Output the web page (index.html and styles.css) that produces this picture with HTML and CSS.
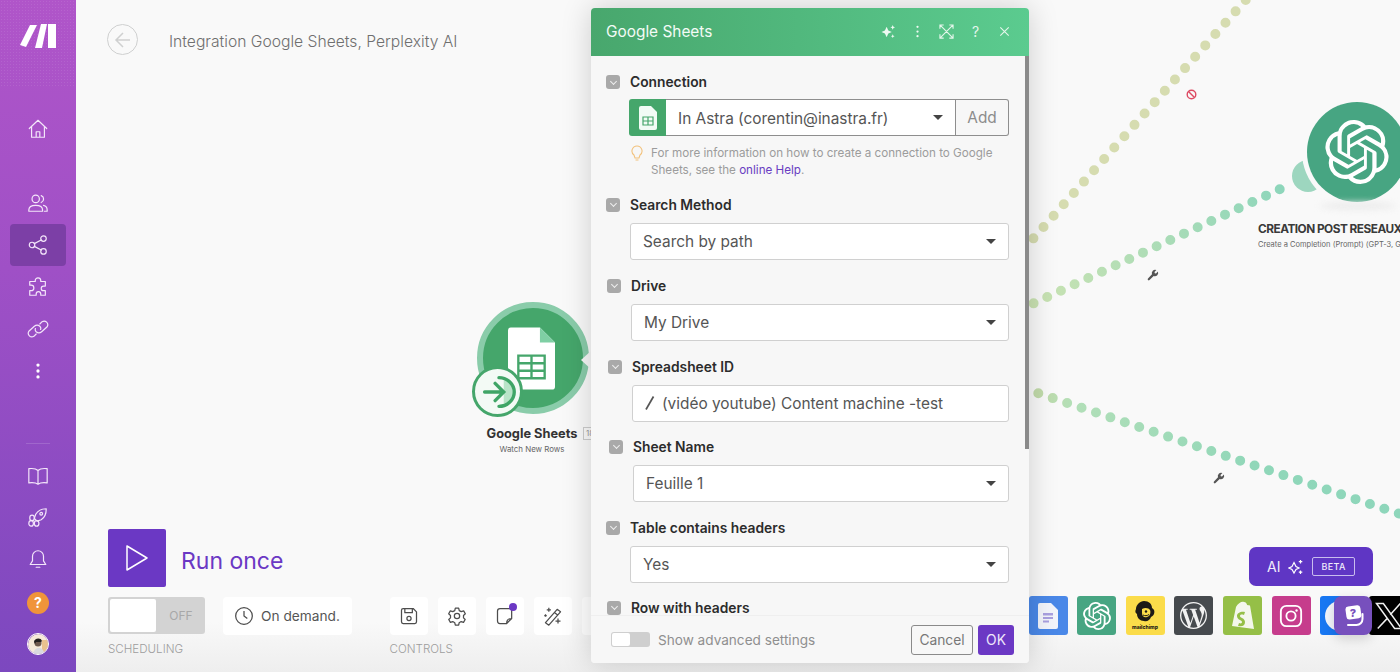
FILE: index.html
```html
<!DOCTYPE html>
<html lang="en">
<head>
  <meta charset="UTF-8">
  <title>Integration Google Sheets, Perplexity AI</title>
  <link rel="stylesheet" href="styles.css">
</head>
<body>
  <aside class="sidebar">
    <div class="logo">
      <svg width="36" height="24" viewBox="20 24 36 24"><path fill="#fff" d="M30 25h7L26 47l-6-2zM41 24h6L42 48h-7zM48 24h8v24h-8z"/></svg>
    </div>
    <nav class="nav-group nav-main">
      <a class="nav-item nav-home"><svg viewBox="0 0 24 24"><path d="M2.500 11.500 12 2.500l9.500 9M5 9.500V21h14V9.500M10 21v-6h4v6"/></svg></a>
      <a class="nav-item nav-team"><svg viewBox="0 0 24 24"><circle cx="9.500" cy="7.500" r="4"/><path d="M2 21v-1.500C2 16 5 14.500 9.500 14.500S17 16 17 19.500V21zM15.500 4a4 4 0 0 1 0 7.500M18 14.500c2.500.5 4 2 4 5V21h-3"/></svg></a>
      <a class="nav-item active"><svg viewBox="0 0 24 24"><circle cx="5.500" cy="12" r="3"/><circle cx="18" cy="5" r="3"/><circle cx="18" cy="19" r="3"/><path d="m8 10.500 7.500-4M8 13.500l7.500 4"/></svg></a>
      <a class="nav-item"><svg viewBox="0 0 24 24"><path d="M9 6V5a3 3 0 0 1 6 0v1h5v5h-2a2.500 2.500 0 0 0 0 5h2v5h-5v-1.500a2.500 2.500 0 0 0-5 0V21H3v-5h1.500a3 3 0 0 0 0-6H3V6z"/></svg></a>
      <a class="nav-item"><svg viewBox="0 0 24 24"><path d="M10 17.500 7.500 20a4 4 0 0 1-5.500-5.500l6-5.500a4.500 4.500 0 0 1 6 0c1 1 1.200 2.500.8 3.500M14 6.500 16.500 4a4 4 0 0 1 5.500 5.500l-6 5.500a4.500 4.500 0 0 1-6 0c-1-1-1.200-2.500-.8-3.500"/></svg></a>
      <a class="nav-item"><svg viewBox="0 0 24 24"><circle class="fill" cx="12" cy="5.500" r="1.800"/><circle class="fill" cx="12" cy="12" r="1.800"/><circle class="fill" cx="12" cy="18.500" r="1.800"/></svg></a>
    </nav>
    <div class="nav-rule"></div>
    <nav class="nav-group nav-lower">
      <a class="nav-item"><svg viewBox="0 0 24 24"><path d="M12 6C10 4 6 3.500 2 4v15.500c4-.5 8 0 10 1.500 2-1.500 6-2 10-1.500V4c-4-.5-8 0-10 2zM12 6v15"/></svg></a>
      <a class="nav-item"><svg viewBox="0 0 24 24"><path d="M21 3c-5 0-9 2-11.500 6L8 13.500l3 3 4.500-1.500C19.500 12.500 21 8 21 3z"/><circle cx="15.500" cy="8.500" r="1.500"/><ellipse cx="5.500" cy="13" rx="2.500" ry="3"/><ellipse cx="4.500" cy="19" rx="2.500" ry="3"/><ellipse cx="10.500" cy="19" rx="2.500" ry="3"/></svg></a>
      <a class="nav-item"><svg viewBox="0 0 24 24"><path d="M12 3a6 6 0 0 0-6 6v5l-2.500 4h17L18 14V9a6 6 0 0 0-6-6zM10 21h4"/></svg></a>
      <a class="nav-item nav-help"><span class="help-dot">?</span></a>
      <a class="nav-item"><span class="avatar"><svg width="22" height="22" viewBox="0 0 22 22"><circle cx="11" cy="11" r="11" fill="#f6ead8"/><path fill="#e9c28f" d="M14 6h6v12h-6z"/><path fill="#d9d9de" d="M5 22c0-6 3-8 6-8s5 2 6 8z"/><circle cx="10" cy="9" r="3.500" fill="#6f5a4d"/><path fill="#24211f" d="M6 8c0-4 7-5 8-1l-1 1H8l-1 2z"/></svg></span></a>
    </nav>
  </aside>

  <main class="canvas">
    <svg class="links" width="1324" height="672" viewBox="76 0 1324 672">
      <defs>
        <linearGradient id="linkTwo" gradientUnits="userSpaceOnUse" x1="1030" y1="305" x2="1280" y2="189">
          <stop offset="0" stop-color="#cbe3b2"/>
          <stop offset="1" stop-color="#8ed6bb"/>
        </linearGradient>
        <linearGradient id="linkThree" gradientUnits="userSpaceOnUse" x1="1038" y1="393" x2="1400" y2="514">
          <stop offset="0" stop-color="#c2dbaa"/>
          <stop offset="0.1" stop-color="#b2dfb8"/>
          <stop offset="0.6" stop-color="#90d7b9"/>
          <stop offset="1" stop-color="#8ed6bb"/>
        </linearGradient>
      </defs>
      <path class="dots" stroke="#d6dcb0" d="M1245.700 0 1030 242.200"/>
      <path class="dots dots-two" stroke="url(#linkTwo)" d="M1279.700 189.300 1030 305"/>
      <path class="dots" stroke="url(#linkThree)" d="M1038.300 393.300 1400 514"/>
    </svg>

    <header class="scenario-head">
      <a class="back"><svg width="20" height="20" viewBox="0 0 20 20"><path d="M17 10H3M10 3l-7 7 7 7"/></svg></a>
      <h1>Integration Google Sheets, Perplexity AI</h1>
    </header>

    <div class="node sheets-node">
      <div class="sheets-disc">
        <svg width="47" height="63" viewBox="0 0 50 66"><path fill="#fff" d="M3 0h31l16 16v47a3 3 0 0 1-3 3H3a3 3 0 0 1-3-3V3a3 3 0 0 1 3-3z"/><path fill="#7fcfa4" d="M34 0l16 16H34z"/><path fill="none" stroke="#45a66b" stroke-width="2.500" d="M11 30h28v24H11zM11 38h28M11 46h28M25 30v24"/></svg>
      </div>
      <div class="trigger">
        <svg width="44" height="44" viewBox="0 0 46 46"><circle cx="23" cy="23" r="21" fill="#f3faf5"/><path d="M29 7a18 18 0 0 1 0 32" fill="#b9e4c8"/><path fill="none" stroke="#3fa566" stroke-width="3.500" stroke-linecap="round" d="M24 8c9 0 16 7 16 15s-7 15-16 15M9 23h19M20 14l9 9-9 9"/></svg>
      </div>
      <div class="node-name">Google Sheets</div>
      <div class="node-sub">Watch New Rows</div>
    </div>
    <span class="node-badge">18</span>

    <div class="node gpt-node">
      <span class="gpt-ear"></span>
      <div class="gpt-disc">
        <svg width="64" height="64" viewBox="0 0 24 24"><path fill="#fff" d="M22.282 9.821a5.985 5.985 0 0 0-.516-4.911 6.046 6.046 0 0 0-6.51-2.9A6.065 6.065 0 0 0 4.981 4.182a5.985 5.985 0 0 0-3.998 2.9 6.046 6.046 0 0 0 .743 7.097 5.98 5.98 0 0 0 .511 4.911 6.051 6.051 0 0 0 6.515 2.9A5.985 5.985 0 0 0 13.26 24a6.056 6.056 0 0 0 5.772-4.206 5.989 5.989 0 0 0 3.998-2.9 6.056 6.056 0 0 0-.748-7.073zm-9.022 12.608a4.476 4.476 0 0 1-2.876-1.041l.142-.08 4.778-2.758a.795.795 0 0 0 .393-.681v-6.737l2.02 1.169a.071.071 0 0 1 .038.052v5.583a4.504 4.504 0 0 1-4.495 4.493zm-9.661-4.125a4.471 4.471 0 0 1-.535-3.014l.142.085 4.783 2.758a.771.771 0 0 0 .781 0l5.843-3.369v2.333a.08.08 0 0 1-.033.061L9.74 19.95a4.499 4.499 0 0 1-6.141-1.646zM2.341 7.896a4.485 4.485 0 0 1 2.366-1.973V11.6a.766.766 0 0 0 .388.677l5.814 3.354-2.02 1.169a.076.076 0 0 1-.071 0l-4.83-2.787A4.504 4.504 0 0 1 2.34 7.872zm16.596 3.856L13.104 8.364 15.119 7.2a.076.076 0 0 1 .071 0l4.83 2.791a4.494 4.494 0 0 1-.676 8.105v-5.678a.79.79 0 0 0-.407-.667zm2.011-3.023l-.142-.085-4.774-2.782a.776.776 0 0 0-.785 0L9.409 9.23V6.897a.066.066 0 0 1 .028-.061l4.83-2.787a4.499 4.499 0 0 1 6.68 4.66zM8.306 12.863l-2.02-1.164a.08.08 0 0 1-.038-.057V6.074a4.499 4.499 0 0 1 7.376-3.454l-.142.081L8.704 5.459a.795.795 0 0 0-.393.681zm1.098-2.365l2.602-1.5 2.607 1.5v2.999l-2.597 1.5-2.607-1.5z"/></svg>
      </div>
      <div class="gpt-shadow"></div>
      <div class="gpt-name">CREATION POST RESEAUX</div>
      <div class="gpt-sub">Create a Completion (Prompt) (GPT-3, GPT-3.5, GPT-4)</div>
    </div>

    <svg class="mark mark-ban" width="11" height="11" viewBox="0 0 11 11"><circle cx="5.500" cy="5.500" r="4.300"/><path d="m2.500 2.500 6 6"/></svg>
    <svg class="mark mark-tool mark-tool-a" width="12" height="12" viewBox="0 0 12 12"><path d="M10.900 2.600 9 4.500 7.800 4.200 7.500 3l1.900-1.900A3.300 3.300 0 0 0 5 5.300L1 9.500A1 1 0 0 0 2.500 11L6.700 7a3.300 3.300 0 0 0 4.200-4.400z"/></svg>
    <svg class="mark mark-tool mark-tool-b" width="12" height="12" viewBox="0 0 12 12"><path d="M10.900 2.600 9 4.500 7.800 4.200 7.500 3l1.900-1.900A3.300 3.300 0 0 0 5 5.300L1 9.500A1 1 0 0 0 2.500 11L6.700 7a3.300 3.300 0 0 0 4.200-4.400z"/></svg>

    <div class="bottom-fade"></div>

    <div class="run-box">
      <button class="run-btn"><svg width="24" height="28" viewBox="0 0 24 28"><path d="M2 2v24l20-12z"/></svg></button>
      <span class="run-label">Run once</span>
    </div>

    <div class="toolbar">
      <div class="tool-section tool-schedule">
        <div class="tool-row">
          <div class="big-toggle"><span class="knob"></span><span class="off">OFF</span></div>
          <div class="tool-chip"><svg width="20" height="20" viewBox="0 0 24 24"><circle cx="12" cy="12" r="10"/><path d="M12 6v6l4 3"/></svg><span>On demand.</span></div>
        </div>
        <div class="tool-caption">SCHEDULING</div>
      </div>
      <div class="tool-section">
        <div class="tool-row tool-icons">
          <div class="tool-btn"><svg width="20" height="20" viewBox="0 0 24 24"><path d="M5 3h12l4 4v12a2 2 0 0 1-2 2H5a2 2 0 0 1-2-2V5a2 2 0 0 1 2-2zM7 3v5h9V3"/><circle cx="12" cy="15" r="2.500"/></svg></div>
          <div class="tool-btn"><svg width="20" height="20" viewBox="0 0 24 24"><circle cx="12" cy="12" r="3.200"/><path d="m10 2.500 4 0 .7 3 2.400 1.300 2.900-.9 2 3.400-2.200 2.100v2.800l2 2-2 3.400-2.800-.9-2.400 1.400-.6 2.900h-4l-.7-2.900-2.400-1.400-2.800.9-2-3.400 2.100-2v-2.800L2 9.300l2-3.400 2.900.9 2.400-1.300z"/></svg></div>
          <div class="tool-btn note-btn"><svg width="20" height="20" viewBox="0 0 24 24"><path d="M6 3h14v12l-6 6H6a3 3 0 0 1-3-3V6a3 3 0 0 1 3-3zM14 21c0-4 1-6 6-6"/></svg><span class="note-dot"></span></div>
          <div class="tool-btn"><svg width="20" height="20" viewBox="0 0 24 24"><path d="M3 20 17 4l4 3L7 23zM14 8l4 3M7 2v5M4.500 4.500h5M18 15v6M15 18h6M3 10v3M1.500 11.500h3"/></svg></div>
          <div class="tool-btn tool-btn-cut"></div>
        </div>
        <div class="tool-caption">CONTROLS</div>
      </div>
    </div>

    <div class="ai-btn">
      <span>AI</span>
      <svg width="16" height="16" viewBox="0 0 16 16"><path d="M6 3.500 8 7.500l3 1.500-3 1.500L6 14l-2-3.500L1 9l3-1.500zM12.500 1v3.500M10.800 2.700h3.500M12.500 11.500V15M10.800 13.200h3.500"/></svg>
      <span class="beta">BETA</span>
    </div>

    <div class="apps">
      <div class="app app-docs"><svg width="20" height="26" viewBox="0 0 20 26"><path fill="#f3f5fb" d="M2 0h11l7 7v17a2 2 0 0 1-2 2H2a2 2 0 0 1-2-2V2a2 2 0 0 1 2-2z"/><path fill="#a9a0e0" d="M5 10h10v2.500H5zM5 14h10v2H5zM5 17.500h6v2H5z"/></svg></div>
      <div class="app app-gpt"><svg width="28" height="28" viewBox="0 0 24 24"><path fill="#fff" d="M22.282 9.821a5.985 5.985 0 0 0-.516-4.911 6.046 6.046 0 0 0-6.51-2.9A6.065 6.065 0 0 0 4.981 4.182a5.985 5.985 0 0 0-3.998 2.9 6.046 6.046 0 0 0 .743 7.097 5.98 5.98 0 0 0 .511 4.911 6.051 6.051 0 0 0 6.515 2.9A5.985 5.985 0 0 0 13.26 24a6.056 6.056 0 0 0 5.772-4.206 5.989 5.989 0 0 0 3.998-2.9 6.056 6.056 0 0 0-.748-7.073zm-9.022 12.608a4.476 4.476 0 0 1-2.876-1.041l.142-.08 4.778-2.758a.795.795 0 0 0 .393-.681v-6.737l2.02 1.169a.071.071 0 0 1 .038.052v5.583a4.504 4.504 0 0 1-4.495 4.493zm-9.661-4.125a4.471 4.471 0 0 1-.535-3.014l.142.085 4.783 2.758a.771.771 0 0 0 .781 0l5.843-3.369v2.333a.08.08 0 0 1-.033.061L9.74 19.95a4.499 4.499 0 0 1-6.141-1.646zM2.341 7.896a4.485 4.485 0 0 1 2.366-1.973V11.6a.766.766 0 0 0 .388.677l5.814 3.354-2.02 1.169a.076.076 0 0 1-.071 0l-4.83-2.787A4.504 4.504 0 0 1 2.34 7.872zm16.596 3.856L13.104 8.364 15.119 7.2a.076.076 0 0 1 .071 0l4.83 2.791a4.494 4.494 0 0 1-.676 8.105v-5.678a.79.79 0 0 0-.407-.667zm2.011-3.023l-.142-.085-4.774-2.782a.776.776 0 0 0-.785 0L9.409 9.23V6.897a.066.066 0 0 1 .028-.061l4.83-2.787a4.499 4.499 0 0 1 6.68 4.66zM8.306 12.863l-2.02-1.164a.08.08 0 0 1-.038-.057V6.074a4.499 4.499 0 0 1 7.376-3.454l-.142.081L8.704 5.459a.795.795 0 0 0-.393.681zm1.098-2.365l2.602-1.5 2.607 1.5v2.999l-2.597 1.5-2.607-1.5z"/></svg></div>
      <div class="app app-chimp"><svg width="32" height="34" viewBox="0 0 32 34"><path fill="#1d1a16" d="M15 2c5 0 8 3 8 7 2 1 3 3 2 6-1 2-2 2-3 3-1 3-4 5-7 4-4 0-7-3-7-7-2-1-2-3-1-5 0-4 4-8 8-8z"/><path fill="#fbdc4a" d="M13 10c3-2 7-1 8 1 1 3 0 6-3 7-3 1-5-1-5-4z"/><circle cx="17" cy="12.500" r="1.200" fill="#1d1a16"/><path fill="none" stroke="#1d1a16" stroke-width="1" d="M14 16c2 1 4 1 6-.5"/><text class="chimp-word" x="16" y="30" text-anchor="middle">mailchimp</text></svg></div>
      <div class="app app-wp"><svg width="27" height="27" viewBox="0 0 24 24"><path fill="#f1f1f1" d="M21.469 6.825c.84 1.537 1.318 3.3 1.318 5.175 0 3.979-2.156 7.456-5.363 9.325l3.295-9.527c.615-1.54.82-2.771.82-3.864 0-.405-.026-.78-.07-1.11m-7.981.105c.647-.03 1.232-.105 1.232-.105.582-.075.514-.93-.067-.899 0 0-1.755.135-2.88.135-1.064 0-2.85-.15-2.85-.15-.585-.03-.661.855-.075.885 0 0 .54.061 1.125.09l1.68 4.605-2.37 7.08L5.354 6.9c.649-.03 1.234-.1 1.234-.1.585-.075.516-.93-.065-.896 0 0-1.746.138-2.874.138-.2 0-.438-.008-.69-.015C4.911 3.15 8.235 1.215 12 1.215c2.809 0 5.365 1.072 7.286 2.833-.046-.003-.091-.009-.141-.009-1.06 0-1.812.923-1.812 1.914 0 .89.513 1.643 1.06 2.531.411.72.89 1.643.89 2.977 0 .915-.354 1.994-.821 3.479l-1.075 3.585-3.9-11.61.001.014zM12 22.784c-1.059 0-2.081-.153-3.048-.437l3.237-9.406 3.315 9.087c.024.053.05.101.078.149-1.12.393-2.325.609-3.582.609M1.211 12c0-1.564.336-3.05.935-4.39L7.29 21.709C3.694 19.96 1.212 16.271 1.211 12M12 0C5.385 0 0 5.385 0 12s5.385 12 12 12 12-5.385 12-12S18.615 0 12 0"/></svg></div>
      <div class="app app-shopify"><svg width="26" height="30" viewBox="0 0 26 30"><path fill="#f4f7ec" d="M6 6c2-4 6-6 8-5 2 0 3 2 3 3l3 .5L24 28 2 25z"/><path fill="#95bf47" d="M15 11l-1 3c-3-1-4 0-4 1 0 2 5 2 5 6s-3 5-7 4l1-3c2 1 3 0 3-1 0-2-5-2-5-6 0-3 4-5 8-4z"/></svg></div>
      <div class="app app-insta"><svg width="24" height="24" viewBox="0 0 26 26"><rect x="2" y="2" width="22" height="22" rx="6"/><circle cx="13" cy="13" r="5"/><circle class="fill" cx="19" cy="7" r="1.300"/></svg></div>
      <div class="app app-blue"><span class="blue-blob"></span></div>
      <div class="app app-x"><svg width="30" height="30" viewBox="0 0 24 24"><path fill="none" stroke="#f0f0f0" stroke-width="1.200" d="M2 2h5.500L22 22h-5.500zM21 2 13 11M11 13.500 3 22"/></svg></div>
    </div>
    <div class="chat-btn"><svg width="22" height="22" viewBox="0 0 22 22"><path fill="#fff" d="M7 1h9a3 3 0 0 1 3 3v7a3 3 0 0 1-3 3H7a3 3 0 0 1-3-3V4a3 3 0 0 1 3-3z" transform="rotate(-8 11 8)"/><path fill="none" stroke="#fff" stroke-width="2" stroke-linecap="round" d="M20.500 9v5a6 6 0 0 1-6 6H6"/><text x="11" y="12" text-anchor="middle" class="chat-q">?</text></svg></div>

    <span class="modal-arrow"></span>
    <section class="modal">
      <div class="modal-head">
        <span class="modal-title">Google Sheets</span>
        <div class="modal-actions">
          <svg width="15" height="15" viewBox="0 0 16 16"><path class="fill" d="M6 3l1.800 4 3.700 1.600-3.700 1.600L6 14l-1.800-3.800L.5 8.600l3.700-1.600zM12.500 1l.8 1.800 1.700.7-1.700.8-.8 1.700-.8-1.700-1.700-.8 1.700-.7zM12.500 11l.7 1.400 1.300.6-1.300.6-.7 1.400-.7-1.400-1.300-.6 1.300-.6z"/></svg>
          <svg width="15" height="15" viewBox="0 0 16 16"><circle class="fill" cx="8" cy="3" r="1.200"/><circle class="fill" cx="8" cy="8" r="1.200"/><circle class="fill" cx="8" cy="13" r="1.200"/></svg>
          <svg width="15" height="15" viewBox="0 0 16 16"><path d="M1 5V1h4M11 1h4v4M15 11v4h-4M5 15H1v-4M1 1l14 14M15 1 1 15"/></svg>
          <span class="head-q">?</span>
          <svg width="15" height="15" viewBox="0 0 16 16"><path d="m3.500 3.500 9 9M12.500 3.500l-9 9"/></svg>
        </div>
      </div>
      <div class="modal-body">
        <div class="field">
          <div class="field-label"><span class="chev"></span>Connection</div>
          <div class="conn">
            <span class="conn-icon"><svg width="18" height="24" viewBox="0 0 18 24"><path fill="#f2fbf5" d="M2 0h10l6 6v16a2 2 0 0 1-2 2H2a2 2 0 0 1-2-2V2a2 2 0 0 1 2-2z"/><path fill="none" stroke="#45a66b" stroke-width="1.200" d="M4 11h10v8H4zM4 15h10M9 11v8"/></svg></span>
            <span class="conn-value">In Astra (corentin@inastra.fr)<i class="caret"></i></span>
            <span class="conn-add">Add</span>
          </div>
          <div class="hint">
            <svg width="12" height="16" viewBox="0 0 12 16"><path d="M6 1a5 5 0 0 0-3 9l1 3h4l1-3a5 5 0 0 0-3-9zM4.500 15h3"/></svg>
            <p>For more information on how to create a connection to Google Sheets, see the <a>online Help</a>.</p>
          </div>
        </div>
        <div class="field field-search">
          <div class="field-label"><span class="chev"></span>Search Method</div>
          <div class="select">Search by path<i class="caret"></i></div>
        </div>
        <div class="field field-drive">
          <div class="field-label"><span class="chev"></span>Drive</div>
          <div class="select">My Drive<i class="caret"></i></div>
        </div>
        <div class="field field-sheet">
          <div class="field-label"><span class="chev"></span>Spreadsheet ID</div>
          <div class="select select-path"><svg width="10" height="16" viewBox="0 0 10 16"><path d="M8.500 1.500 1 14.500"/></svg>(vidéo youtube) Content machine -test</div>
        </div>
        <div class="field field-name">
          <div class="field-label"><span class="chev"></span>Sheet Name</div>
          <div class="select">Feuille 1<i class="caret"></i></div>
        </div>
        <div class="field field-table">
          <div class="field-label"><span class="chev"></span>Table contains headers</div>
          <div class="select">Yes<i class="caret"></i></div>
        </div>
        <div class="field field-row">
          <div class="field-label"><span class="chev"></span>Row with headers</div>
        </div>
        <span class="scroll"></span>
      </div>
      <div class="modal-foot">
        <span class="mini-toggle"><i></i></span>
        <span class="adv">Show advanced settings</span>
        <button class="btn-cancel">Cancel</button>
        <button class="btn-ok">OK</button>
      </div>
    </section>
  </main>
</body>
</html>
```

FILE: styles.css
```css
* {
  box-sizing: border-box;
}
body {
  margin: 0;
  width: 1400px;
  height: 672px;
  overflow: hidden;
  display: flex;
  font-family: Inter, "Liberation Sans", sans-serif;
  background-color: #f9f9f9;
  color: #333;
}
svg {
  display: block;
}

/* sidebar */
.sidebar {
  width: 76px;
  flex-shrink: 0;
  display: flex;
  flex-direction: column;
  align-items: center;
  background: linear-gradient(180deg, #b055c9 0%, #9f50c6 40%, #7c48bf 100%);
}
.logo {
  width: 100%;
  height: 88px;
  padding: 24px 0 0 20px;
  background-image: radial-gradient(rgba(255, 255, 255, 0.09) 1px, transparent 1px);
  background-size: 3px 3px;
}
.nav-group {
  display: flex;
  flex-direction: column;
  align-items: center;
  width: 100%;
}
.nav-main {
  margin-top: 20px;
}
.nav-item {
  width: 56px;
  height: 42px;
  display: flex;
  align-items: center;
  justify-content: center;
  border-radius: 4px;
}
.nav-item svg {
  width: 22px;
  height: 22px;
  fill: none;
  stroke: #f4e6fa;
  stroke-width: 1.300;
  stroke-linejoin: round;
  stroke-linecap: round;
}
.nav-item .avatar svg {
  stroke: none;
}
.nav-item svg .fill {
  fill: #fff;
  stroke: none;
}
.nav-home {
  margin-bottom: 32px;
}
.active {
  background-color: #7c3fa6;
}
.nav-rule {
  width: 24px;
  height: 1px;
  margin: 51px 0 11px;
  background-color: rgba(255, 255, 255, 0.15);
}
.nav-lower .nav-item {
  height: 41.500px;
}
.nav-lower .nav-help {
  margin-top: 2.500px;
}
.help-dot {
  width: 22px;
  height: 22px;
  border-radius: 50%;
  background-color: #f0943a;
  color: #fff;
  font-size: 14px;
  font-weight: 700;
  line-height: 22px;
  text-align: center;
}
.avatar {
  width: 22px;
  height: 22px;
  border-radius: 50%;
  overflow: hidden;
  border: 1px solid #fff;
}

/* canvas */
.canvas {
  position: relative;
  flex: 1;
  height: 672px;
  overflow: hidden;
}
.links {
  position: absolute;
  top: 0;
  left: 0;
}
.dots {
  fill: none;
  stroke-width: 10;
  stroke-linecap: round;
  stroke-dasharray: 0 15.200;
}
.dots-two {
  stroke-dasharray: 0 15.070;
}
.scenario-head {
  position: absolute;
  top: 24px;
  left: 31px;
  display: flex;
  align-items: center;
}
.back {
  width: 31px;
  height: 31px;
  border: 1.500px solid #cfd0d0;
  border-radius: 50%;
  display: flex;
  align-items: center;
  justify-content: center;
}
.back svg {
  fill: none;
  stroke: #cfd0d0;
  stroke-width: 1.500;
}
.scenario-head h1 {
  margin: 3px 0 0 31px;
  font-size: 15.670px;
  font-weight: 300;
  color: #6f6f6f;
}

/* nodes */
.node {
  position: absolute;
}
.sheets-node {
  left: 396px;
  top: 302px;
  width: 120px;
}
.sheets-disc {
  width: 112px;
  height: 112px;
  margin-left: 5px;
  padding-right: 3px;
  border-radius: 50%;
  background-color: #45a66b;
  border: 6px solid #8accaa;
  display: flex;
  align-items: center;
  justify-content: center;
}
.trigger {
  position: absolute;
  left: 0;
  top: 64px;
  width: 51px;
  height: 51px;
  border: 3px solid #45a66b;
  border-radius: 50%;
  background-color: #f3faf5;
  display: flex;
  align-items: center;
  justify-content: center;
}
.node-name {
  width: 120px;
  margin-top: 12px;
  font-size: 12.800px;
  font-weight: 700;
  text-align: center;
  color: #333;
}
.node-sub {
  width: 120px;
  margin-top: 3px;
  font-size: 7.900px;
  text-align: center;
  color: #666;
}
.node-badge {
  position: absolute;
  left: 507px;
  top: 427px;
  width: 14px;
  height: 13px;
  border: 1px solid #ccc;
  font-size: 8px;
  color: #999;
  line-height: 11px;
  text-align: center;
}
.gpt-node {
  left: 1182px;
  top: 102px;
  width: 300px;
  height: 150px;
}
.gpt-disc {
  position: absolute;
  left: 49px;
  top: 0;
  width: 100px;
  height: 100px;
  border-radius: 50%;
  background-color: #47a582;
  box-shadow: 0 0 0 5px #f9f9f9;
  display: flex;
  align-items: center;
  justify-content: center;
}
.gpt-ear {
  position: absolute;
  left: 34px;
  top: 58px;
  width: 32px;
  height: 32px;
  border-radius: 50%;
  background-color: #9dd6bf;
}
.gpt-shadow {
  position: absolute;
  left: 62px;
  top: 100px;
  width: 76px;
  height: 8px;
  border-radius: 50%;
  background-color: #ececec;
  filter: blur(3px);
}
.gpt-name {
  position: absolute;
  left: 0;
  top: 120px;
  font-size: 11.800px;
  font-weight: 700;
  letter-spacing: -0.5px;
  white-space: nowrap;
  color: #3a3a3a;
}
.gpt-sub {
  position: absolute;
  left: 0;
  top: 138px;
  font-size: 7.500px;
  white-space: nowrap;
  color: #666;
}
.mark {
  position: absolute;
  fill: none;
  stroke-width: 1.400;
}
.mark-ban {
  left: 1110px;
  top: 89px;
  stroke: #dd4a62;
}
.mark-tool {
  fill: #555;
  stroke: none;
}
.mark-tool-a {
  left: 1071px;
  top: 269px;
}
.mark-tool-b {
  left: 1137px;
  top: 472px;
}
.bottom-fade {
  position: absolute;
  left: 0;
  right: 0;
  bottom: 0;
  height: 50px;
  background: linear-gradient(180deg, rgba(238, 238, 238, 0) 0%, #eeeeee 100%);
}

/* run + toolbar */
.run-box {
  position: absolute;
  left: 32px;
  top: 529px;
  display: flex;
  align-items: center;
}
.run-btn {
  width: 58px;
  height: 58px;
  padding: 0;
  border: none;
  border-radius: 2px;
  background-color: #6b38c4;
  display: flex;
  align-items: center;
  justify-content: center;
}
.run-btn svg {
  fill: none;
  stroke: #fff;
  stroke-width: 1.500;
  stroke-linejoin: round;
}
.run-label {
  margin: 5px 0 0 15px;
  font-size: 23px;
  color: #6b38c4;
}
.toolbar {
  position: absolute;
  left: 32px;
  top: 597px;
  display: flex;
  gap: 37.500px;
}
.tool-row {
  display: flex;
  gap: 18px;
}
.tool-icons {
  gap: 10px;
}
.tool-caption {
  margin-top: 7px;
  font-size: 11.600px;
  font-weight: 300;
  color: #9d9d9d;
}
.big-toggle {
  width: 97px;
  height: 37px;
  display: flex;
  padding: 2px;
  border-radius: 3px;
  background-color: #d3d3d3;
}
.knob {
  width: 46px;
  height: 33px;
  margin-right: 3px;
  background-color: #fff;
  border-radius: 2px;
}
.off {
  flex: 1;
  font-size: 12px;
  line-height: 33px;
  text-align: center;
  color: #a8a8a8;
}
.tool-chip {
  width: 129px;
  height: 38px;
  display: flex;
  align-items: center;
  gap: 7px;
  padding-left: 11px;
  border-radius: 4px;
  background-color: #fff;
  font-size: 13.700px;
  color: #555;
}
.tool-chip svg,
.tool-btn svg {
  fill: none;
  stroke: #4d4d4d;
  stroke-width: 1.500;
  stroke-linejoin: round;
}
.tool-btn {
  position: relative;
  width: 38px;
  height: 38px;
  display: flex;
  align-items: center;
  justify-content: center;
  border-radius: 4px;
  background-color: #fff;
}
.note-dot {
  position: absolute;
  top: 6px;
  right: 7px;
  width: 8px;
  height: 8px;
  border-radius: 50%;
  background-color: #6b38c4;
}
.ai-btn {
  position: absolute;
  left: 1173px;
  top: 547px;
  width: 124px;
  height: 39px;
  display: flex;
  align-items: center;
  gap: 8px;
  padding-left: 18px;
  border-radius: 7px;
  background-color: #5f36c4;
  color: #f0ecfb;
  font-size: 14px;
}
.ai-btn svg {
  fill: none;
  stroke: #fff;
  stroke-width: 1.200;
}
.beta {
  padding: 3px 8px;
  border: 1px solid #c9bcee;
  border-radius: 2px;
  font-size: 9px;
  font-weight: 500;
  letter-spacing: 0.4px;
}

/* app strip */
.apps {
  position: absolute;
  left: 952.500px;
  top: 596px;
  display: flex;
  gap: 9.670px;
}
.app {
  width: 39px;
  height: 39px;
  display: flex;
  align-items: center;
  justify-content: center;
  border-radius: 3px;
  overflow: hidden;
}
.app-docs {
  background-color: #4a88e8;
}
.app-gpt {
  background-color: #47a582;
}
.app-chimp {
  background-color: #fbdc4a;
}
.chimp-word {
  font-size: 5px;
  font-weight: 800;
  fill: #1d1a16;
}
.app-wp {
  background-color: #464a4e;
}
.app-shopify {
  background-color: #95bf47;
}
.app-insta {
  background-color: #c63c8c;
}
.app-insta svg {
  fill: none;
  stroke: #fff;
  stroke-width: 2;
}
.app-insta svg .fill {
  fill: #fff;
  stroke: none;
}
.app-blue {
  background-color: #1877f2;
}
.blue-blob {
  width: 30px;
  height: 30px;
  border-radius: 50%;
  background-color: #f2f5fb;
}
.app-x {
  background-color: #000;
}
.chat-btn {
  position: absolute;
  left: 1258px;
  top: 596px;
  width: 38px;
  height: 39px;
  display: flex;
  align-items: center;
  justify-content: center;
  border-radius: 8px;
  background-color: #7750bd;
  box-shadow: 0 4px 12px rgba(0, 0, 0, 0.15);
}
.chat-q {
  font-size: 11px;
  font-weight: 800;
  fill: #7750bd;
}

/* module dialog */
.modal-arrow {
  position: absolute;
  left: 505px;
  top: 350px;
  width: 0;
  height: 0;
  border-top: 10px solid transparent;
  border-bottom: 10px solid transparent;
  border-right: 11px solid #f7f7f7;
}
.modal {
  position: absolute;
  left: 515px;
  top: 8px;
  width: 438px;
  height: 655px;
  display: flex;
  flex-direction: column;
  border-radius: 4px;
  overflow: hidden;
  background-color: #f7f7f7;
  box-shadow: 0 0 30px rgba(0, 0, 0, 0.18);
}
.modal-head {
  height: 48px;
  flex-shrink: 0;
  display: flex;
  align-items: center;
  justify-content: space-between;
  padding: 0 17px 1px 15px;
  background: linear-gradient(90deg, #48a76d 0%, #5bcb8f 100%);
  color: #f3fbf6;
}
.modal-title {
  font-size: 15.400px;
}
.modal-actions {
  display: flex;
  align-items: center;
  gap: 14px;
}
.modal-actions svg {
  fill: none;
  stroke: #e4f6eb;
  stroke-width: 1.200;
}
.modal-actions svg .fill {
  fill: #eef9f2;
  stroke: none;
}
.head-q {
  width: 15px;
  font-size: 14px;
  text-align: center;
  color: #e4f6eb;
}
.modal-body {
  position: relative;
  flex: 1;
  overflow: hidden;
  padding: 18px 20px 0 15px;
}
.scroll {
  position: absolute;
  right: 0;
  top: 0;
  width: 4px;
  height: 393px;
  background-color: #8a8a8a;
}
.field-label {
  display: flex;
  align-items: center;
  gap: 10px;
  height: 16px;
  font-size: 13.800px;
  font-weight: 600;
  color: #2c2c2c;
}
.chev {
  position: relative;
  width: 14px;
  height: 14px;
  border-radius: 3px;
  background-color: #a9a9a9;
}
.chev::after {
  content: "";
  position: absolute;
  left: 4.500px;
  top: 3.500px;
  width: 4px;
  height: 4px;
  border-right: 1.300px solid #eee;
  border-bottom: 1.300px solid #eee;
  transform: rotate(45deg);
}
.conn {
  display: flex;
  height: 37px;
  margin: 9px 0 0 23px;
  font-size: 15.400px;
}
.conn-icon {
  width: 37px;
  display: flex;
  align-items: center;
  justify-content: center;
  border-radius: 3px 0 0 3px;
  background-color: #45a66b;
}
.conn-value {
  position: relative;
  flex: 1;
  padding-left: 12px;
  line-height: 37px;
  background-color: #fff;
  border: 1px solid #8e8e8e;
  border-left: none;
  color: #555;
}
.conn-add {
  width: 53px;
  line-height: 36px;
  text-align: center;
  color: #8c8c8c;
  border: 1px solid #8e8e8e;
  border-left: none;
  border-radius: 0 3px 3px 0;
}
.caret {
  position: absolute;
  right: 12px;
  top: 15px;
  width: 0;
  height: 0;
  border-left: 5px solid transparent;
  border-right: 5px solid transparent;
  border-top: 5.500px solid #444;
}
.hint {
  display: flex;
  margin: 9px 0 0 25px;
  gap: 8px;
}
.hint svg {
  flex-shrink: 0;
  fill: none;
  stroke: #f2c27d;
  stroke-width: 1.100;
}
.hint p {
  margin: 0;
  font-size: 11.650px;
  line-height: 17.300px;
  color: #9c9c9c;
}
.hint a {
  color: #6a3ec2;
}
.field-search {
  margin-top: 17.400px;
}
.field-drive {
  margin: 18px 0 0 1px;
}
.field-sheet {
  margin: 18px 0 0 2px;
}
.field-name {
  margin: 17px 0 0 3px;
}
.field-table {
  margin-top: 18px;
}
.field-row {
  margin: 17px 0 0 1px;
}
.select {
  position: relative;
  height: 37px;
  margin: 10px 0 0 24px;
  padding-left: 12px;
  line-height: 35px;
  font-size: 15.400px;
  background-color: #fff;
  border: 1px solid #d0d0d0;
  border-radius: 3px;
  color: #555;
}
.select-path {
  display: flex;
  align-items: center;
  gap: 7px;
}
.select-path svg {
  fill: none;
  stroke: #555;
  stroke-width: 1.700;
}
.modal-foot {
  height: 48px;
  flex-shrink: 0;
  display: flex;
  align-items: center;
  padding: 0 15px 0 20px;
  border-top: 1px solid #efefef;
  background-color: #f7f7f7;
}
.mini-toggle {
  width: 39px;
  height: 15px;
  padding: 1px;
  border-radius: 3px;
  background-color: #cfcfcf;
}
.mini-toggle i {
  display: block;
  width: 18px;
  height: 13px;
  border-radius: 2px;
  background-color: #fff;
}
.adv {
  flex: 1;
  margin-left: 8px;
  font-size: 13.600px;
  color: #8f8f8f;
}
.btn-cancel {
  width: 62px;
  height: 30px;
  padding: 0;
  font: inherit;
  font-size: 13.800px;
  color: #777;
  background-color: #f7f7f7;
  border: 1px solid #8a8a8a;
  border-radius: 3px;
}
.btn-ok {
  width: 36px;
  height: 30px;
  margin-left: 5px;
  padding: 0;
  font: inherit;
  font-size: 13.800px;
  color: #eee6fb;
  background-color: #6b38c4;
  border: none;
  border-radius: 3px;
}
```
